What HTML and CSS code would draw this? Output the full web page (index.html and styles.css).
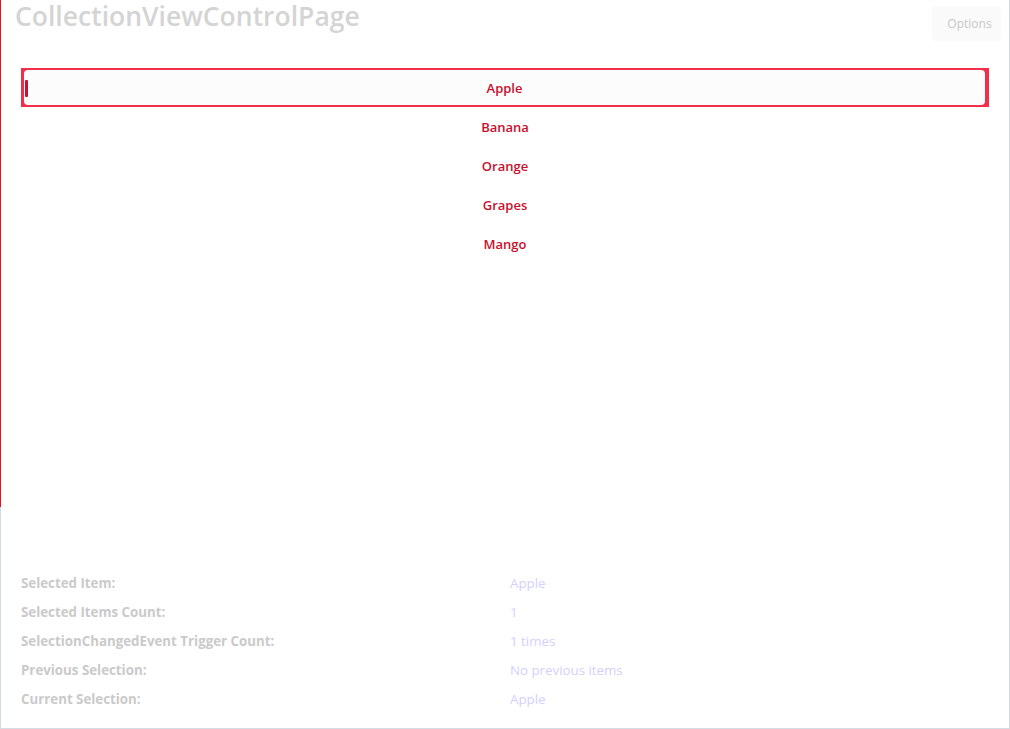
FILE: index.html
```html
<!DOCTYPE html>
<html>
<head>
    <meta http-equiv="Content-Type" content="text/html; charset=utf-8" />
    <title>CollectionViewControlPage</title>
    <link rel="stylesheet" href="styles.css">
</head>
<body>
<div class="window">
    <div class="main">
        <div class="head">
            <h1 class="title">CollectionViewControlPage</h1>
            <a href="javascript:;" class="options">Options</a>
        </div>
        <ul class="list">
            <li class="item selected"><span class="inner"><span class="mark"></span>Apple</span></li>
            <li class="item"><span class="inner">Banana</span></li>
            <li class="item"><span class="inner">Orange</span></li>
            <li class="item"><span class="inner">Grapes</span></li>
            <li class="item"><span class="inner">Mango</span></li>
        </ul>
    </div>
    <div class="summary">
        <div class="label">Selected Item:</div><div class="value">Apple</div>
        <div class="label">Selected Items Count:</div><div class="value">1</div>
        <div class="label">SelectionChangedEvent Trigger Count:</div><div class="value">1 times</div>
        <div class="label">Previous Selection:</div><div class="value">No previous items</div>
        <div class="label">Current Selection:</div><div class="value">Apple</div>
    </div>
</div>
</body>
</html>
```

FILE: styles.css
```css
*{margin:0;padding:0;box-sizing:border-box;}
body{background:#fff;font-family:"Open Sans","Noto Sans",sans-serif;}
li{list-style:none;}
a{text-decoration:none;}
.window{
    width:1010px;
    height:729px;
    display:flex;
    flex-direction:column;
    border-right:1px solid #d3dadf;
    border-bottom:1px solid #d3dde3;
}
.main{
    height:507px;
    border-left:1px solid #e81123;
}
.head{
    display:flex;
    justify-content:space-between;
    align-items:flex-start;
    height:68px;
    padding:0 8px 0 14px;
}
.title{
    font-size:26.5px;
    font-weight:600;
    color:#d4d4d4;
    line-height:32px;
}
.options{
    margin-top:6px;
    width:69px;
    height:35px;
    line-height:35px;
    padding-left:6px;
    text-align:center;
    background:#fafafa;
    border-radius:4px;
    font-size:12px;
    color:#c8c8c8;
}
.list{
    margin:0 20px;
}
.item{
    height:39px;
    display:flex;
}
.item .inner{
    flex:1;
    display:flex;
    align-items:center;
    justify-content:center;
    position:relative;
    font-size:13px;
    font-weight:600;
    color:#c8102e;
}
.selected{
    background:#f0304a;
    padding:2px 4px 2px 3px;
}
.selected .inner{
    background:#fcfcfc;
    border-radius:4px;
}
.mark{
    position:absolute;
    left:1px;
    top:10px;
    width:3px;
    height:17px;
    background:#c50f3c;
    border-radius:1px;
}
.summary{
    flex:1;
    border-left:1px solid #cfdde5;
    padding:66px 20px 0;
    display:grid;
    grid-template-columns:489px auto;
    grid-auto-rows:29px;
    align-content:start;
}
.label{
    font-size:13.3px;
    font-weight:700;
    color:#cacaca;
    line-height:20px;
}
.value{
    font-size:13.3px;
    color:#d3d0ff;
    line-height:20px;
}
```
